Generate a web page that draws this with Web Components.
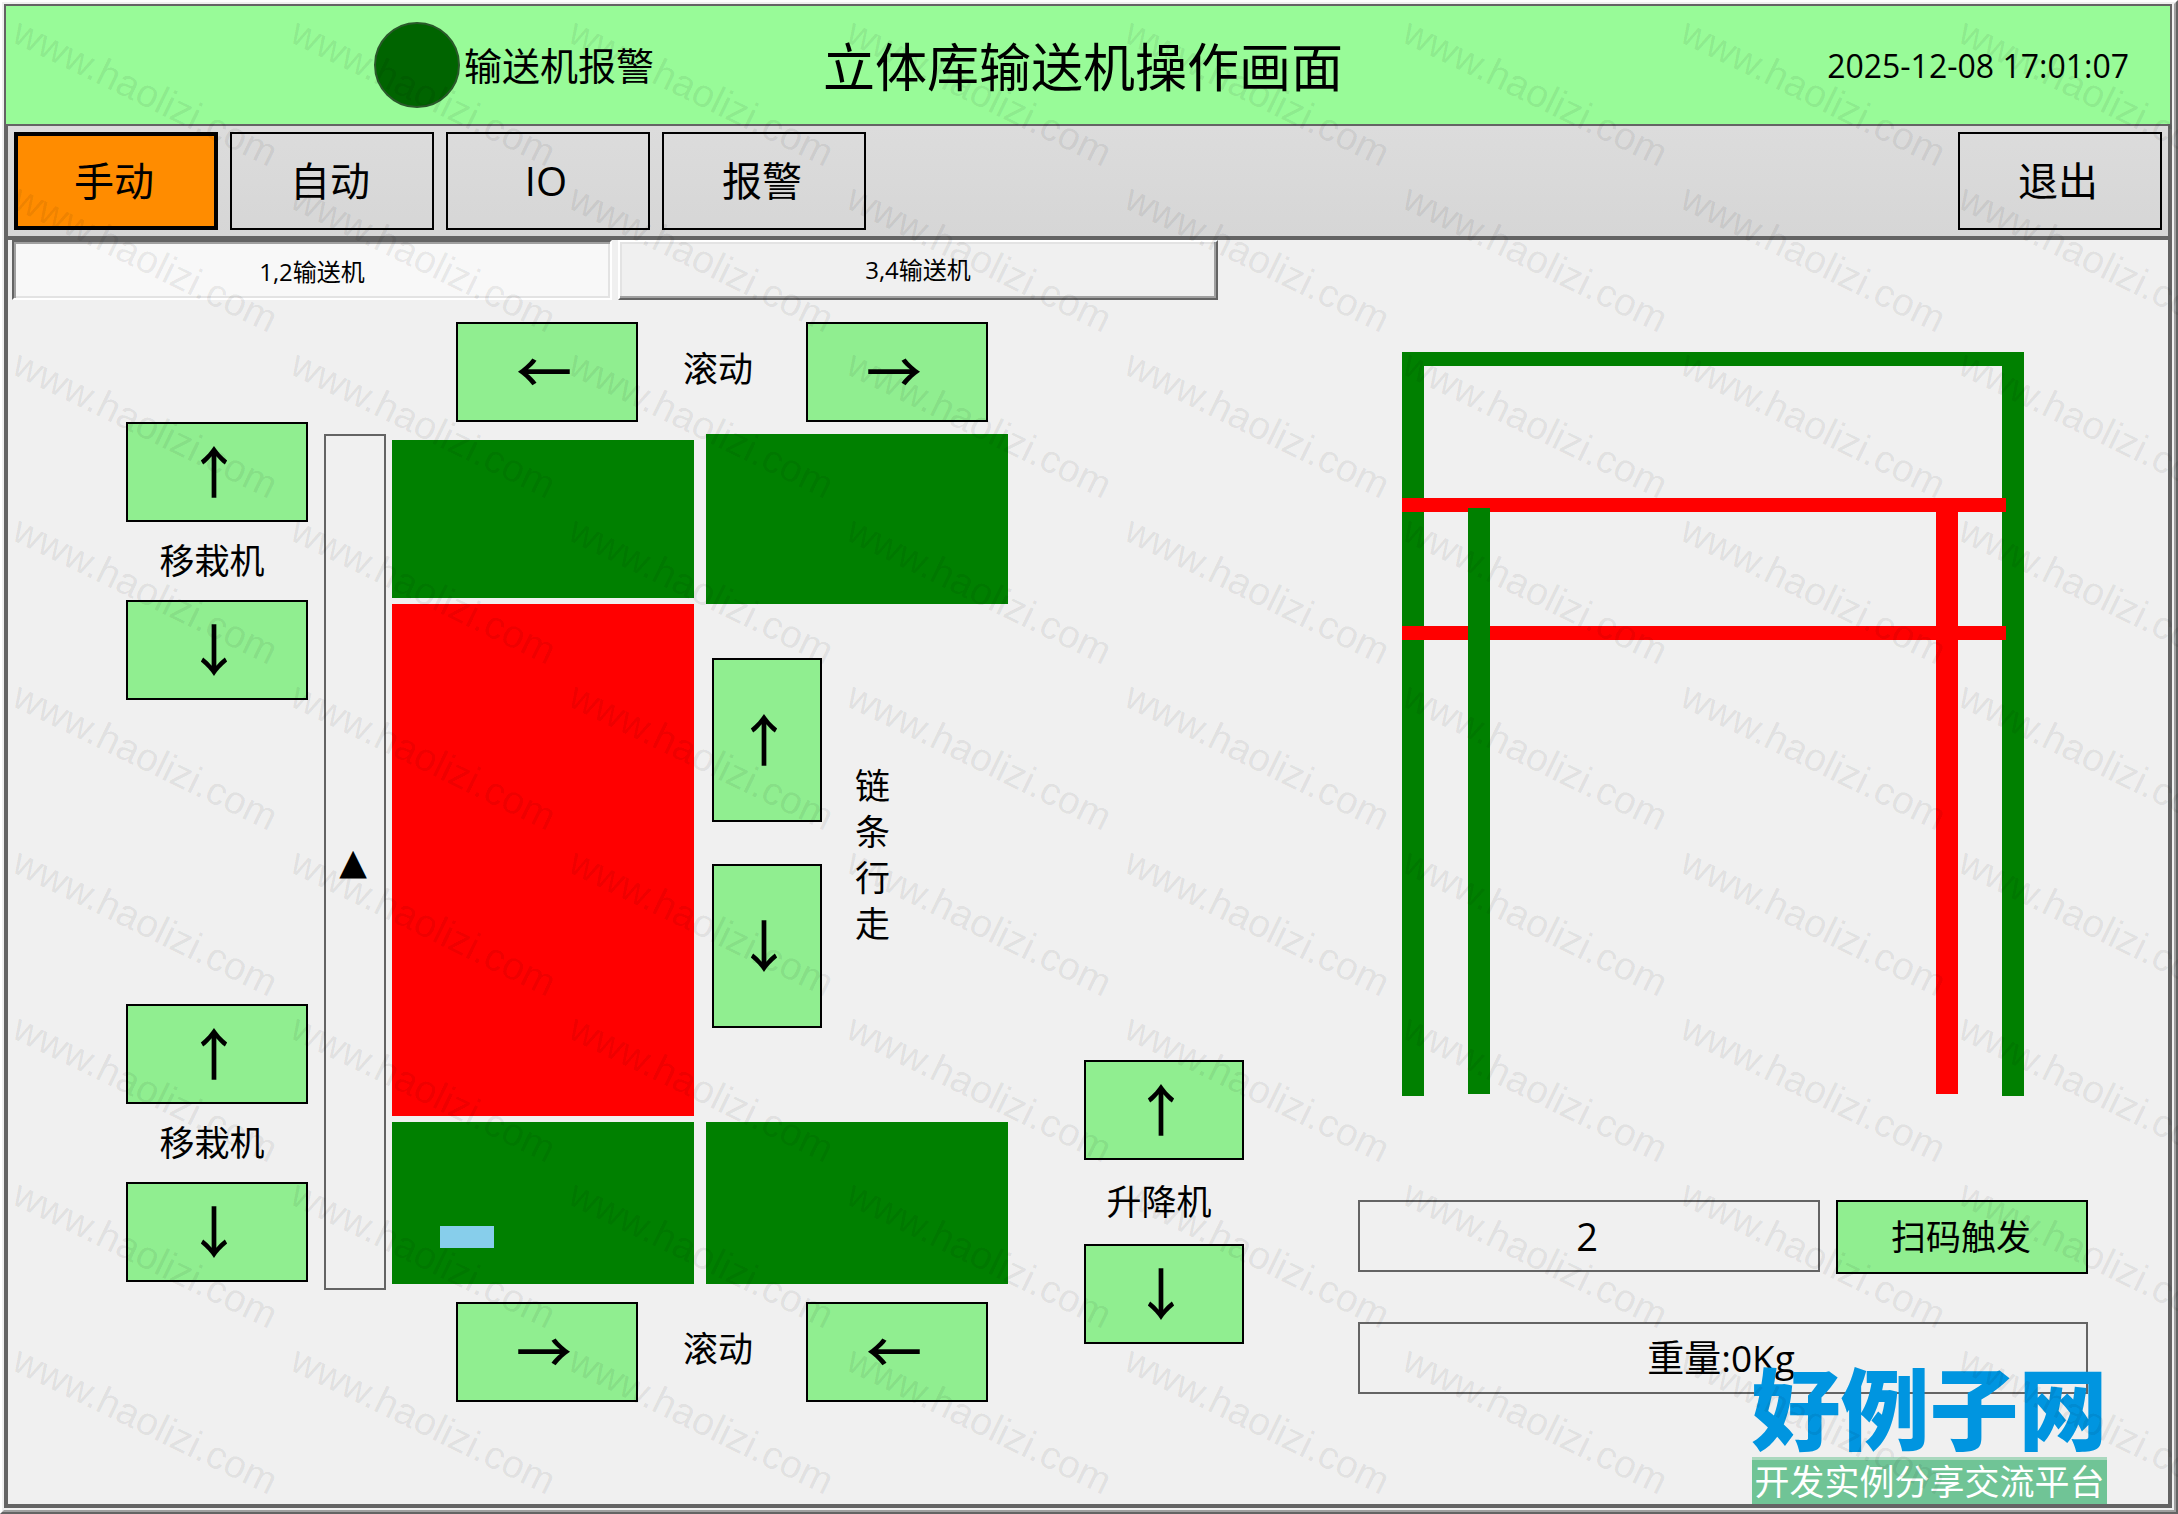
<!DOCTYPE html>
<html lang="zh-CN">
<head>
<meta charset="utf-8">
<title>立体库输送机操作画面</title>
<style>
  body { margin: 0; background: #f0f0f0; font-family: "Open Sans", "Noto Sans CJK SC", sans-serif; color: #000; }
</style>
</head>
<body>
<hmi-app></hmi-app>
<script>
function define(name, html, setup) {
  const template = document.createElement('template');
  template.innerHTML = '<style>*{box-sizing:border-box} button,input,output{font:inherit;color:inherit;margin:0}</style>' + html;
  customElements.define(name, class extends HTMLElement {
    constructor() {
      super();
      this.attachShadow({ mode: 'open' }).appendChild(template.content.cloneNode(true));
    }
    connectedCallback() { if (setup) setup(this, this.shadowRoot); }
  });
}

/* Round status lamp */
define('status-lamp', `
<style>
  :host { display: flex; align-items: center; gap: 4px; font-size: 38px; line-height: 50px; }
  i { width: 86px; height: 86px; border-radius: 50%; background: #006400; border: 2px solid #2a582a; flex: none; }
</style>
<i></i><span><slot></slot></span>`);

/* Green title bar */
define('title-bar', `
<style>
  :host { display: grid; grid-template-columns: 818fr auto 828fr; align-items: center; height: 122px;
          background: #98fb98; border: 2px solid #646464; }
  status-lamp { padding-left: 368px; }
  h1 { margin: 0; padding-top: 4px; font-size: 52px; font-weight: 400; line-height: 64px; white-space: nowrap; }
  time { justify-self: end; padding: 2px 41px 0 0; font-size: 32px; line-height: 44px; white-space: nowrap; }
</style>
<status-lamp>输送机报警</status-lamp>
<h1>立体库输送机操作画面</h1>
<time datetime="2025-12-08T17:01:07">2025-12-08 17:01:07</time>`);

/* Button of the mode bar */
define('mode-button', `
<style>
  :host { display: block; width: 204px; height: 98px; }
  button { width: 100%; height: 100%; padding: 0 4px 0 0; border: 2px solid #000; background: none; font-size: 40px; line-height: 52px; }
  :host([active]) button { background: #ff8c00; border-width: 4px; }
</style>
<button type="button"><slot></slot></button>`);

define('mode-bar', `
<style>
  :host { display: block; padding: 6px; background: linear-gradient(#dcdcdc, #d6d6d6); border-bottom: 4px solid #646464; }
  nav { display: flex; gap: 12px; }
  .exit { margin-left: auto; }
</style>
<nav>
  <mode-button active>手动</mode-button>
  <mode-button>自动</mode-button>
  <mode-button>IO</mode-button>
  <mode-button>报警</mode-button>
  <mode-button class="exit">退出</mode-button>
</nav>`);

define('page-tabs', `
<style>
  :host { display: block; padding-left: 4px; }
  div { display: flex; gap: 6px; }
  button { flex: 0 1 600px; height: 60px; padding: 0; font-size: 24px; line-height: 32px; background: #f0f0f0;
           border: 2px solid; border-color: #fff #646464 #646464 #fff;
           box-shadow: inset -2px -2px #a0a0a0, inset 2px 2px #e3e3e3; }
  button[aria-selected=true] { background: #f8f8f8; border-color: #646464 #fff #fff #646464; padding-top: 4px;
           box-shadow: inset 2px 2px #a0a0a0, inset -2px -2px #e3e3e3; }
</style>
<div role="tablist">
  <button type="button" role="tab" aria-selected="true">1,2输送机</button>
  <button type="button" role="tab" aria-selected="false">3,4输送机</button>
</div>`);

/* Jog button with an arrow; dir-to is up, down, left or right */
define('jog-button', `
<style>
  :host { display: block; width: 182px; height: 100px; }
  button { display: flex; align-items: center; justify-content: center; width: 100%; height: 100%; padding: 0 6px 6px 0;
           border: 2px solid #000; background: #90ee90; font: 500 56px/60px "Noto Sans CJK SC", sans-serif; }
</style>
<button type="button"><span></span></button>`, (el, root) => {
  root.querySelector('span').textContent = { up: '↑', down: '↓', left: '←', right: '→' }[el.getAttribute('dir-to')];
});

/* Up button, label, down button */
define('jog-pair', `
<style>
  :host { display: flex; flex-direction: column; width: 182px; }
  jog-button { width: 100%; }
  span { height: var(--label-height, 78px); display: flex; align-items: center; justify-content: center;
         padding-right: 10px; font-size: 35px; line-height: 46px; }
</style>
<jog-button dir-to="up"></jog-button><span><slot></slot></span><jog-button dir-to="down"></jog-button>`);

define('roller-row', `
<style>
  :host { display: flex; align-items: center; padding-left: 64px; }
  span { width: 168px; text-align: center; padding: 0 8px 6px 0; font-size: 35px; line-height: 46px; }
</style>
<slot name="first"></slot><span><slot></slot></span><slot name="last"></slot>`);

/* Plan view of the two conveyor lanes */
define('conveyor-plan', `
<style>
  :host { display: grid; grid-template-columns: 302px 302px; column-gap: 12px; height: 850px; }
  .lane { display: flex; flex-direction: column; }
  .first { padding-top: 6px; gap: 6px; }
  .ok { background: #008000; }
  .fault { background: #f00; flex: 1; }
  .end { height: 162px; }
  .start { height: 158px; }
  .second .start { height: 170px; }
  .load { padding: 104px 48px 0; }
  .load i { display: block; width: 54px; height: 22px; background: #87ceeb; }
  .chain { flex: 1; display: flex; align-items: center; gap: 33px; padding-left: 6px; }
  .keys { display: flex; flex-direction: column; gap: 42px; padding-bottom: 40px; }
  .keys jog-button { width: 110px; height: 164px; }
  .chain span { width: 35px; font-size: 35px; line-height: 46px; padding-bottom: 16px; }
</style>
<div class="lane first">
  <div class="ok start"></div>
  <div class="fault"></div>
  <div class="ok end load"><i></i></div>
</div>
<div class="lane second">
  <div class="ok start"></div>
  <div class="chain">
    <div class="keys"><jog-button dir-to="up"></jog-button><jog-button dir-to="down"></jog-button></div>
    <span>链条行走</span>
  </div>
  <div class="ok end"></div>
</div>`);

/* Front view of the lift frame */
define('lift-frame', `
<style>
  :host { display: block; }
  svg { display: block; width: 622px; height: 744px; }
</style>
<svg viewBox="0 0 622 744" aria-hidden="true">
  <path fill="#008000" d="M0 0H622V744H600V14H22V744H0Z"/>
  <path fill="#f00" d="M0 146H604V160H0ZM0 274H604V288H0ZM534 150H556V742H534Z"/>
  <path fill="#008000" d="M66 156H88V742H66Z"/>
</svg>`);

define('scan-panel', `
<style>
  :host { display: flex; flex-direction: column; gap: 48px; }
  .row { display: flex; align-items: flex-start; gap: 16px; }
  input, output { display: block; height: 72px; border: 2px solid #646464; background: none; text-align: center; padding: 0 4px 0 0; border-radius: 0; line-height: 68px; }
  input { flex: 1; min-width: 0; font-size: 38px; }
  output { width: 100%; font-size: 37px; }
  button { width: 252px; height: 74px; padding: 0 2px 0 0; border: 2px solid #000; background: #90ee90; font-size: 35px; line-height: 46px; }
</style>
<div class="row">
  <input type="text" value="2" readonly aria-label="扫码结果">
  <button type="button">扫码触发</button>
</div>
<output>重量:0Kg</output>`);

define('manual-page', `
<style>
  :host { display: grid; align-items: start; padding: 22px 0 100px;
          grid-template-columns: 118fr auto 76fr auto 114fr auto 80fr; }
  .plan { grid-column: 2; display: flex; align-items: flex-start; }
  .shifters { display: flex; flex-direction: column; gap: 304px; padding-top: 100px; }
  .track { margin: 112px 6px 0 16px; padding-right: 4px; width: 62px; height: 856px; border: 2px solid #646464;
           display: flex; align-items: center; justify-content: center; font: 36px/40px "DejaVu Sans", sans-serif; }
  .lanes { display: flex; flex-direction: column; }
  conveyor-plan { margin: 12px 0 18px; }
  .lift { grid-column: 4; width: 160px; margin-top: 738px; --label-height: 84px; }
  .side { grid-column: 6; width: 730px; padding-top: 30px; }
  lift-frame { margin: 0 0 104px 44px; }
</style>
<section class="plan">
  <div class="shifters">
    <jog-pair>移栽机</jog-pair>
    <jog-pair>移栽机</jog-pair>
  </div>
  <div class="track">▲</div>
  <div class="lanes">
    <roller-row><jog-button slot="first" dir-to="left"></jog-button>滚动<jog-button slot="last" dir-to="right"></jog-button></roller-row>
    <conveyor-plan></conveyor-plan>
    <roller-row><jog-button slot="first" dir-to="right"></jog-button>滚动<jog-button slot="last" dir-to="left"></jog-button></roller-row>
  </div>
</section>
<jog-pair class="lift">升降机</jog-pair>
<section class="side">
  <lift-frame></lift-frame>
  <scan-panel></scan-panel>
</section>`);

/* Repeating diagonal site mark over the whole page */
define('water-mark', `
<style>
  :host { position: absolute; inset: 0; overflow: hidden; pointer-events: none; }
  svg { display: block; width: 100%; height: 100%; }
  text { font: 39px "Liberation Sans", sans-serif; fill: #000; fill-opacity: .08; }
</style>
<svg aria-hidden="true"></svg>`, (el, root) => {
  const svg = root.querySelector('svg');
  for (let row = 0; row < 9; row++) {
    for (let col = 0; col < 8; col++) {
      const t = document.createElementNS('http://www.w3.org/2000/svg', 'text');
      t.setAttribute('transform', `translate(${10 + col * 278} ${41 + row * 166}) rotate(26)`);
      t.textContent = 'www.haolizi.com';
      svg.appendChild(t);
    }
  }
});

define('site-logo', `
<style>
  :host { position: absolute; right: 71px; bottom: 10px; width: 355px; text-align: center; white-space: nowrap; }
  b { display: flex; justify-content: center; padding-bottom: 4px; font: 900 89px/96px "Noto Sans CJK SC", sans-serif; color: #0095e0; }
  small { display: block; border-top: 3px solid #a9d8be; background: #70c496; color: #fff; font-size: 35px; line-height: 44px; }
</style>
<b>好例子网</b><small>开发实例分享交流平台</small>`);

define('hmi-app', `
<style>
  :host { display: flex; flex-direction: column; position: relative; min-height: 100vh; box-sizing: border-box;
          border: 2px solid; border-color: #fff #646464 #646464 #fff; }
  .inner { flex: 1; display: flex; flex-direction: column; padding: 0 2px 2px 0;
           border: 2px solid; border-color: #f0f0f0 #a0a0a0 #a0a0a0 #f0f0f0; }
  main { flex: 1; border: 4px solid #646464; border-top: 0; }
  water-mark { inset: -2px; }
  site-logo { right: 69px; bottom: 8px; }
</style>
<div class="inner">
  <title-bar></title-bar>
  <main>
    <mode-bar></mode-bar>
    <page-tabs></page-tabs>
    <manual-page></manual-page>
  </main>
</div>
<site-logo></site-logo>
<water-mark></water-mark>`);
</script>
</body>
</html>
